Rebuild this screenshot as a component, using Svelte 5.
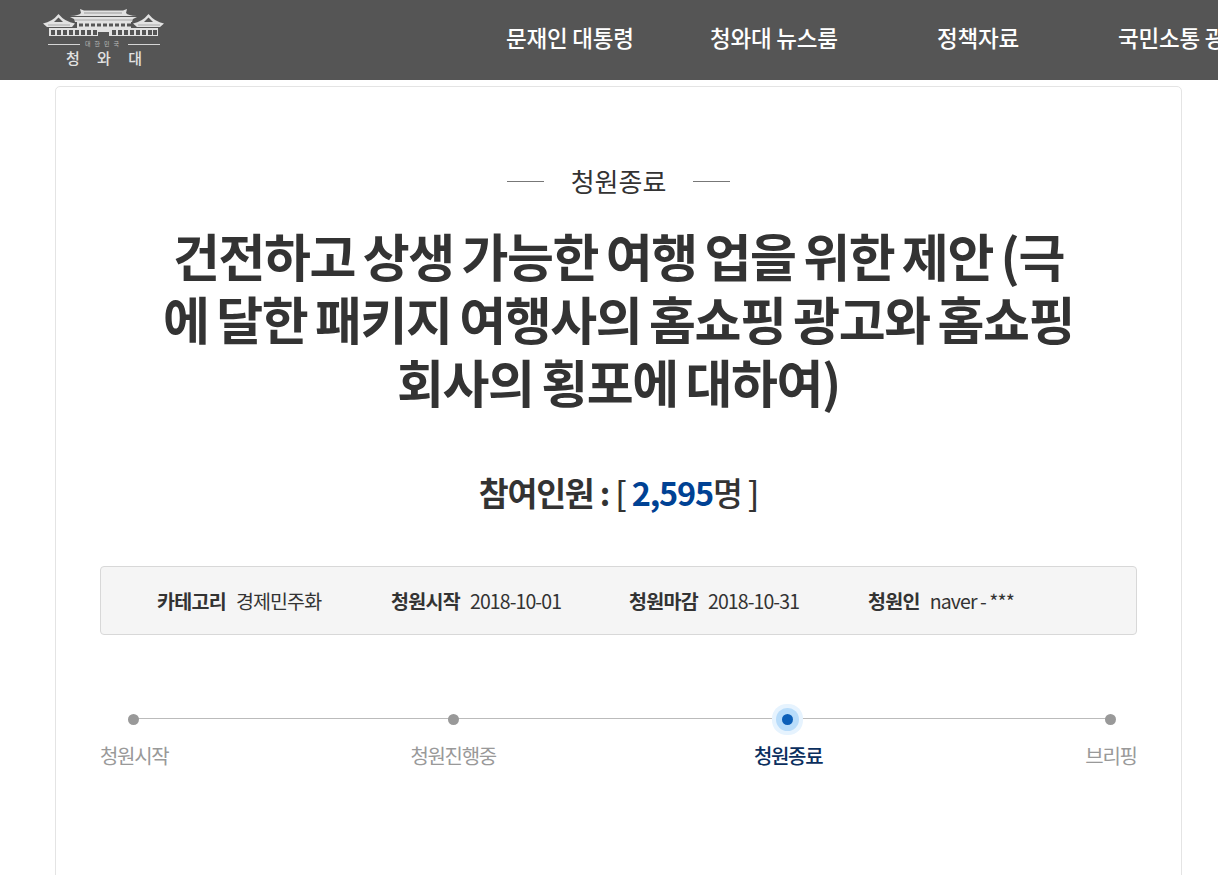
<script>
  const navItems = [
    { label: "문재인 대통령", width: 204 },
    { label: "청와대 뉴스룸", width: 227 },
    { label: "정책자료", width: 181 },
    { label: "국민소통 광장", width: 200 }
  ];
  const meta = [
    { key: "카테고리", value: "경제민주화", width: 234 },
    { key: "청원시작", value: "2018-10-01", width: 238 },
    { key: "청원마감", value: "2018-10-31", width: 239 },
    { key: "청원인", value: "naver - ***", width: 200 }
  ];
  const steps = [
    { label: "청원시작" },
    { label: "청원진행중" },
    { label: "청원종료", active: true },
    { label: "브리핑" }
  ];
  const hallWindows = [35, 41, 47, 53, 59, 65, 71, 77, 83];
  const baseWindows = [7, 13, 19, 25, 31, 37, 43, 49, 68, 74, 80, 86, 92, 98, 104, 109];
</script>

<div class="page">
  <header class="top">
    <a class="logo" href="#top">
      <svg width="120" height="28" viewBox="0 0 120 28" aria-hidden="true">
        <g fill="#e2e2e2">
          <path d="M36 0 L40 1.5 H79 L83 0 L82 4 Q84 6.5 93 7 H26 Q35 6.5 37 4Z" />
          <path d="M26 8 H93 L89 10 L88 13 H31 L30 10Z" />
          <path d="M-1 14.5 Q8 13 14.5 5 Q21 13 31 14.5 L28 18 H3Z" />
          <path d="M89 14.5 Q98 13 104.5 5 Q111 13 120 14.5 L116 18 H93Z" />
          <rect x="33" y="13" width="54" height="6" />
          <rect x="5" y="19" width="109" height="8" />
          <path d="M51 20 H68 L66 22 H53Z" />
        </g>
        <g fill="#555">
          <path d="M10 13 L14.5 8.5 L19 13Z" />
          <path d="M100 13 L104.5 8.5 L109 13Z" />
          <rect x="40" y="3.5" width="38" height="1" opacity=".5" />
          <rect x="28" y="10.5" width="64" height="1" opacity=".4" />
          <rect x="4" y="15.5" width="22" height="1" opacity=".4" />
          <rect x="94" y="15.5" width="22" height="1" opacity=".4" />
          {#each hallWindows as x}
            <rect {x} y="14.5" width="4" height="3" />
          {/each}
          {#each baseWindows as x}
            <rect {x} y="21" width="4" height="5" />
          {/each}
          <rect x="54" y="23" width="11" height="4" />
        </g>
      </svg>
      <div class="logo-rule"><span>대한민국</span></div>
      <div class="logo-name">청 와 대</div>
    </a>
    <nav class="nav">
      {#each navItems as item}
        <a href="#top" style="width: {item.width}px">{item.label}</a>
      {/each}
    </nav>
  </header>

  <main class="card">
    <div class="status"><span>청원종료</span></div>
    <h1 class="title">건전하고 상생 가능한 여행 업을 위한 제안 (극에 달한 패키지 여행사의 홈쇼핑 광고와 홈쇼핑 회사의 횡포에 대하여)</h1>
    <h2 class="count">참여인원 : <span class="bracket">[ <span class="num">2,595</span>명 ]</span></h2>

    <ul class="meta">
      {#each meta as row}
        <li style="width: {row.width}px"><strong>{row.key}</strong>{row.value}</li>
      {/each}
    </ul>

    <ol class="steps">
      {#each steps as step}
        <li class:active={step.active}>
          <i></i>
          <span>{step.label}</span>
        </li>
      {/each}
    </ol>
  </main>
</div>

<style>
  :global(body) {
    background: #fff;
    font-family: "Noto Sans CJK KR", "Noto Sans", sans-serif;
    color: #333;
  }
  .page {
    height: 875px;
    overflow: hidden;
  }
  .top {
    height: 80px;
    background: #555;
    display: flex;
    overflow: hidden;
  }
  .logo {
    width: 120px;
    margin: 9px 0 0 44px;
    color: #e2e2e2;
    text-decoration: none;
    flex: none;
  }
  .logo svg {
    display: block;
    overflow: visible;
  }
  .logo-rule {
    display: flex;
    align-items: center;
    gap: 5px;
    font-size: 6px;
    line-height: 8px;
    letter-spacing: 4px;
    margin: 3px 4px 0;
    color: #bbb;
  }
  .logo-rule::before,
  .logo-rule::after {
    content: "";
    flex: 1;
    height: 1px;
    background: #d5d5d5;
  }
  .logo-name {
    text-align: center;
    font-size: 15px;
    line-height: 18px;
    word-spacing: 14px;
    font-weight: 500;
    margin-top: 1px;
  }
  .nav {
    display: flex;
    flex: none;
    margin-left: 342px;
  }
  .nav a {
    flex: none;
    color: #fff;
    font-size: 22.5px;
    font-weight: 500;
    letter-spacing: -0.2px;
    line-height: 74px;
    white-space: nowrap;
    text-decoration: none;
  }
  .card {
    width: 1037px;
    height: 900px;
    margin: 6px 0 0 55px;
    padding: 0 44px;
    border: 1px solid #e4e4e4;
    border-radius: 5px;
    box-sizing: content-box;
  }
  .status {
    margin-top: 72px;
    display: flex;
    justify-content: center;
    align-items: center;
    gap: 27px;
    font-size: 26px;
    line-height: 44px;
    color: #333;
  }
  .status::before,
  .status::after {
    content: "";
    width: 37px;
    height: 1px;
    background: #777;
  }
  .title {
    width: 925px;
    margin: 21px auto 0;
    text-align: center;
    font-size: 51px;
    line-height: 63px;
    font-weight: 700;
    letter-spacing: -1.4px;
    word-spacing: -2.5px;
    word-break: break-all;
    color: #333;
  }
  .count {
    margin: 56px 0 0;
    text-align: center;
    font-size: 32.5px;
    line-height: 46px;
    font-weight: 700;
    letter-spacing: -1.2px;
    color: #333;
  }
  .bracket {
    font-weight: 500;
  }
  .num {
    color: #004294;
    font-weight: 700;
  }
  .meta {
    list-style: none;
    display: flex;
    height: 69px;
    margin: 51px 0 0;
    padding: 0 0 0 56px;
    background: #f5f5f5;
    border: 1px solid #d8d8d8;
    border-radius: 4px;
    box-sizing: border-box;
    font-size: 19.5px;
    letter-spacing: -0.9px;
    line-height: 67px;
    color: #333;
  }
  .meta li {
    flex: none;
    white-space: nowrap;
  }
  .meta strong {
    font-weight: 700;
    letter-spacing: -0.7px;
    margin-right: 10px;
  }
  .steps {
    list-style: none;
    position: relative;
    display: flex;
    margin: 79px 0 0;
    padding: 0;
    font-size: 20px;
    letter-spacing: -1.3px;
    color: #999;
  }
  .steps::before {
    content: "";
    position: absolute;
    left: 33px;
    right: 25px;
    top: 4px;
    height: 1px;
    background: #bbb;
  }
  .steps li {
    position: relative;
    display: flex;
    flex-direction: column;
    align-items: center;
    gap: 15px;
    flex: none;
    white-space: nowrap;
  }
  .steps li:nth-child(2) {
    margin-left: 242px;
  }
  .steps li:nth-child(3) {
    margin-left: 258px;
  }
  .steps li:nth-child(4) {
    margin-left: 263px;
  }
  .steps i {
    width: 11px;
    height: 11px;
    border-radius: 50%;
    background: #999;
  }
  .steps li:nth-child(odd) i {
    margin-right: 2px;
  }
  .steps span {
    line-height: 32px;
  }
  .steps .active {
    color: #0b2f5e;
    font-weight: 500;
  }
  .steps .active i {
    background: #0c5fb8;
    box-shadow: 0 0 0 6px #b8dcfa, 0 0 0 10px #e6f3fe;
  }
</style>
